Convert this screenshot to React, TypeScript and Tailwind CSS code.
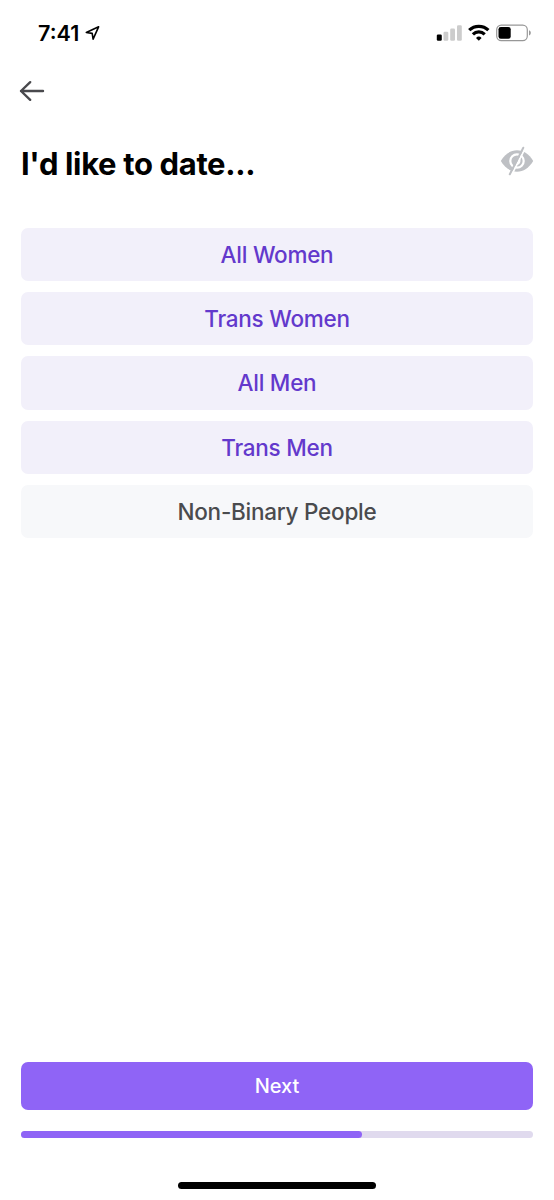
import { useState } from "react";
import type { FC } from "react";
import clsx from "clsx";

const OPTIONS = [
  "All Women",
  "Trans Women",
  "All Men",
  "Trans Men",
  "Non-Binary People",
];

const StatusBar: FC = () => (
  <div className="flex h-[66px] items-center justify-between pr-[22px] pl-[38px]">
    <div className="flex items-center gap-[5px]">
      <span className="w-[42px] text-[21.5px] leading-6 font-semibold whitespace-nowrap">
        7:41
      </span>
      <svg width="15" height="16" viewBox="0 0 15 16" fill="none">
        <path
          d="M13.6 1.8 1.3 7.5l5.9.9.9 5.7 5.5-12.3Z"
          stroke="#000"
          strokeWidth="1.6"
          strokeLinejoin="round"
        />
      </svg>
    </div>
    <svg width="96" height="20" viewBox="0 0 96 20" fill="none">
      <rect x="0.8" y="11.5" width="5" height="6.3" rx="1.2" fill="#000" />
      <rect x="7.5" y="8.7" width="4.8" height="9.1" rx="1.2" fill="#ccc" />
      <rect x="14.2" y="5.6" width="4.8" height="12.2" rx="1.2" fill="#ccc" />
      <rect x="21" y="2.3" width="4.8" height="15.5" rx="1.2" fill="#ccc" />
      <g stroke="#000" strokeWidth="3.2">
        <path d="M33.2 7.2a13.8 13.8 0 0 1 19.2 0" />
        <path d="M36.9 11.3a8.4 8.4 0 0 1 11.8 0" />
      </g>
      <path d="m42.8 17.7-2.8-2.8a4.1 4.1 0 0 1 5.6 0Z" fill="#000" />
      <rect
        x="60.7"
        y="2.1"
        width="30.6"
        height="15.6"
        rx="4.6"
        stroke="#979797"
        strokeWidth="1.2"
      />
      <rect x="62.5" y="4" width="12.2" height="11.8" rx="2.3" fill="#000" />
      <path d="M93 7.3c2.4.8 2.4 4.4 0 5.2Z" fill="#999" />
    </svg>
  </div>
);

const BackIcon: FC = () => (
  <svg width="26" height="22" viewBox="0 0 26 22" fill="none">
    <path
      d="M24 11H2M11.2 2.2 2 11l9.2 8.8"
      stroke="#49494d"
      strokeWidth="2.4"
      strokeLinecap="round"
      strokeLinejoin="round"
    />
  </svg>
);

const HiddenIcon: FC = () => (
  <svg width="34" height="32" viewBox="0 0 34 32" fill="none">
    <path
      d="M.8 16C5 9 10.600 5.300 17 5.300S29 9 33.200 16C29 23 23.400 26.700 17 26.700S5 23 .8 16Z"
      fill="#bec0c4"
    />
    <circle cx="17" cy="16" r="6.700" stroke="#fff" strokeWidth="2.200" />
    <path d="M17.500 12.800a3.300 3.300 0 0 1-1 6.400" stroke="#fff" strokeWidth="1.600" />
    <path d="M25 3.600 11.600 29.800" stroke="#fff" strokeWidth="1.800" />
    <path
      d="M23.300 2.700 9.800 29.300"
      stroke="#bec0c4"
      strokeWidth="2"
      strokeLinecap="round"
    />
  </svg>
);

type OptionButtonProps = {
  label: string;
  selected: boolean;
  onClick: () => void;
};

const OptionButton: FC<OptionButtonProps> = ({ label, selected, onClick }) => (
  <button
    type="button"
    aria-pressed={selected}
    onClick={onClick}
    className={clsx(
      "flex h-[53.3px] w-full items-center justify-center rounded-[7px] pt-[0.5px] text-[22.5px] font-medium tracking-[-0.25px]",
      selected ? "bg-[#f2f0fa] text-[#6339cc]" : "bg-[#f7f8fa] text-[#4a4b4e]",
    )}
  >
    {label}
  </button>
);

export default function App() {
  const [selected, setSelected] = useState<string[]>(OPTIONS.slice(0, 4));

  const toggle = (option: string) => {
    setSelected((prev) =>
      prev.includes(option)
        ? prev.filter((item) => item !== option)
        : [...prev, option],
    );
  };

  return (
    <div className="flex h-[1200px] w-[554px] flex-col bg-white font-['Inter',sans-serif] text-black">
      <StatusBar />

      <div className="flex h-[50px] items-center pl-[19px]">
        <button type="button" aria-label="Back">
          <BackIcon />
        </button>
      </div>

      <header className="mt-[28px] flex h-10 items-start justify-between pr-[20.5px] pl-[21px]">
        <h1 className="pt-[2px] text-[31px] leading-9 font-bold tracking-[-0.35px]">
          I&apos;d like to date...
        </h1>
        <div className="pt-px">
          <HiddenIcon />
        </div>
      </header>

      <div className="mt-[43.7px] flex flex-col gap-[11px] px-[21.4px]">
        {OPTIONS.map((option) => (
          <OptionButton
            key={option}
            label={option}
            selected={selected.includes(option)}
            onClick={() => toggle(option)}
          />
        ))}
      </div>

      <footer className="mt-auto flex flex-col px-[21.4px] pb-[11px]">
        <button
          type="button"
          className="flex h-12 items-center justify-center rounded-[7px] bg-[#8f64f6] text-[20px] font-medium text-white"
        >
          Next
        </button>
        <div className="mt-[21.5px] h-[6.8px] rounded-full bg-[#e0daee]">
          <div className="h-full w-2/3 rounded-full bg-[#8f64f6]" />
        </div>
        <div className="mt-[44px] h-[7px] w-[198px] self-center rounded-full bg-black" />
      </footer>
    </div>
  );
}
